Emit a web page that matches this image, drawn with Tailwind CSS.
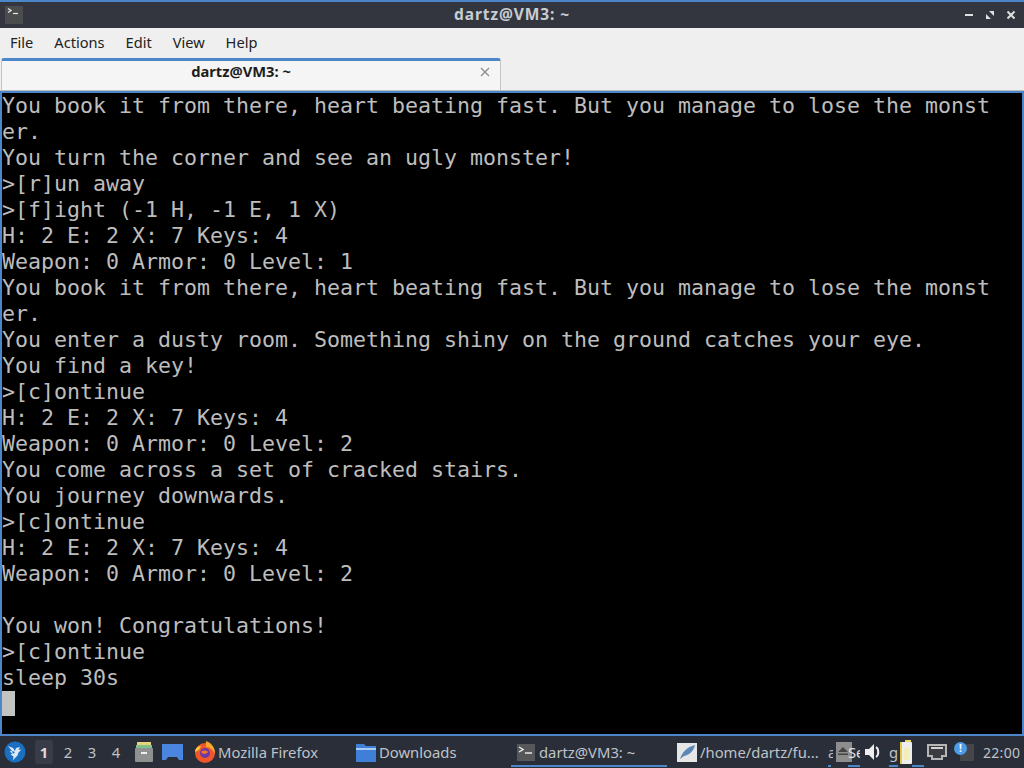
<!DOCTYPE html>
<html lang="en">
<head>
    <meta charset="UTF-8">
    <title>dartz@VM3: ~</title>
    <script src="https://cdn.jsdelivr.net/npm/@tailwindcss/browser@4"></script>
</head>
<body class="w-[1024px] h-[768px] overflow-hidden flex flex-col bg-black font-['Noto_Sans',sans-serif]">

    <!-- Title bar -->
    <div class="h-[28px] shrink-0 border-t-2 border-[#4a86c8] bg-[#33363f] grid grid-cols-[1fr_auto_1fr] items-center px-[5px]">
        <svg class="w-[18px] h-[18px]" viewBox="0 0 18 18">
            <rect width="18" height="18" fill="#4a4c4e"/>
            <path d="M3 2.500l3 2-3 2" fill="none" stroke="#e8e8e8" stroke-width="1.300"/>
            <path d="M8 7.500h5" stroke="#e8e8e8" stroke-width="1.200"/>
        </svg>
        <div class="text-[15.5px] leading-[20px] -mt-[2px] font-bold tracking-[0.9px] text-[#c8cdd4]">dartz@VM3: ~</div>
        <div class="flex items-center justify-end gap-[11px] pr-[3px]">
            <svg class="w-[10px] h-[10px]" viewBox="0 0 10 10"><path d="M1 5h8" stroke="#e0e0e0" stroke-width="2"/></svg>
            <svg class="w-[10px] h-[10px]" viewBox="0 0 10 10"><path d="M4 1h5v5zM1 4v5h5z" fill="#e0e0e0"/></svg>
            <svg class="w-[10px] h-[10px]" viewBox="0 0 10 10"><path d="M1.500 1.500l7 7M8.500 1.500l-7 7" stroke="#e0e0e0" stroke-width="2"/></svg>
        </div>
    </div>

    <!-- Menu bar -->
    <div class="h-[30px] shrink-0 bg-[#efefef] flex items-center gap-[21px] pl-[10px] text-[14.6px] text-[#222]">
        <span>File</span><span>Actions</span><span>Edit</span><span>View</span><span>Help</span>
    </div>

    <!-- Tab bar -->
    <div class="h-[32px] shrink-0 bg-[#efefef] flex items-stretch border-b border-[#bcbcbc] box-content">
        <div class="w-[500px] ml-[1px] bg-[#f5f5f5] border-t-[3px] border-x border-t-[#4a86c8] border-x-[#c4c4c4] rounded-t-[3px] flex items-center relative pb-[8px]">
            <div class="flex-1 text-center text-[14.7px] font-bold text-[#1c1c1c] pr-[20px]">dartz@VM3: ~</div>
            <svg class="absolute right-[10px] top-[6px] w-[10px] h-[10px]" viewBox="0 0 10 10"><path d="M1 1l8 8M9 1l-8 8" stroke="#8a8a8a" stroke-width="1.200"/></svg>
        </div>
    </div>

    <!-- Terminal -->
    <div class="h-[645px] shrink-0 bg-black border-x-2 border-t-2 border-b-2 border-[#4a86c8] overflow-hidden">
        <pre class="font-['DejaVu_Sans_Mono',monospace] text-[21.6px] leading-[26px] text-[#bdbdbd]">You book it from there, heart beating fast. But you manage to lose the monst
er.
You turn the corner and see an ugly monster!
&gt;[r]un away
&gt;[f]ight (-1 H, -1 E, 1 X)
H: 2 E: 2 X: 7 Keys: 4
Weapon: 0 Armor: 0 Level: 1
You book it from there, heart beating fast. But you manage to lose the monst
er.
You enter a dusty room. Something shiny on the ground catches your eye.
You find a key!
&gt;[c]ontinue
H: 2 E: 2 X: 7 Keys: 4
Weapon: 0 Armor: 0 Level: 2
You come across a set of cracked stairs.
You journey downwards.
&gt;[c]ontinue
H: 2 E: 2 X: 7 Keys: 4
Weapon: 0 Armor: 0 Level: 2

You won! Congratulations!
&gt;[c]ontinue
sleep 30s</pre>
        <div class="w-[13px] h-[25px] bg-[#c2c4c2]"></div>
    </div>

    <!-- Panel -->
    <div class="flex-1 bg-[#2a2e39] flex items-center text-[14.8px] text-[#bfc3c8] relative">
        <svg class="w-[22px] h-[22px] ml-[4px] shrink-0" viewBox="0 0 22 22">
            <circle cx="11" cy="11" r="10.500" fill="#1a6fc0"/>
            <path d="M4 5l5 2 2 3 1-3 4-1-1.500 3 3-.5-3 3-1 3-3 3-1.500 2 .5-4-3-2 2-1-3-2 2.500-.5z" fill="#dce9f5"/>
            <path d="M8 10l3 1-2 2z" fill="#1a6fc0"/>
        </svg>
        <div class="w-[18px] h-[24px] ml-[9px] shrink-0 bg-[#383c48] rounded-[2px] flex items-center justify-center font-bold text-[#dcdcdc]">1</div>
        <div class="flex ml-[3px] shrink-0"><span class="w-[24px] text-center">2</span><span class="w-[24px] text-center">3</span><span class="w-[24px] text-center">4</span></div>
        <svg class="w-[20px] h-[22px] ml-[6px] shrink-0" viewBox="0 0 20 22">
            <rect x="3" y="1" width="14" height="3" fill="#e8d27a"/>
            <rect x="2" y="4" width="16" height="3" fill="#7fbf8a"/>
            <rect x="1" y="7" width="18" height="14" rx="1" fill="#8f9090"/>
            <rect x="7" y="11" width="6" height="2" fill="#eee"/>
        </svg>
        <svg class="w-[21px] h-[17px] ml-[8px] shrink-0" viewBox="0 0 21 17">
            <path d="M0 0h21v16h-4l-2-3h-9l-2 3h-4z" fill="#4a86e0"/>
        </svg>

        <div class="flex items-center ml-[11px] w-[162px] shrink-0">
            <svg class="w-[22px] h-[24px] shrink-0" viewBox="0 0 22 24">
                <circle cx="11" cy="13" r="10" fill="#f0562a"/>
                <path d="M12 1c6 2 9 7 9 13-2-4-5-7-9-7z" fill="#f9a82c"/>
                <path d="M1 12c0-4 3-6 6-6l-2 4z" fill="#fbc83a"/>
                <circle cx="11" cy="13" r="5" fill="#6a3aa8"/>
                <path d="M7 12c2-2 5-2 7 0-1 2-5 3-7 0z" fill="#f0762a"/>
            </svg>
            <span class="ml-[2px] whitespace-nowrap">Mozilla Firefox</span>
        </div>

        <div class="flex items-center w-[155px] shrink-0">
            <svg class="w-[20px] h-[19px] shrink-0" viewBox="0 0 20 19">
                <path d="M0 1h8l2 2h10v16h-20z" fill="#3f7fd8"/>
                <path d="M0 5h20v2h-20z" fill="#a8cdf5"/>
            </svg>
            <span class="ml-[3px]">Downloads</span>
        </div>

        <div class="flex items-center h-full w-[156px] shrink-0 relative pl-[6px]">
            <svg class="w-[18px] h-[17px] shrink-0" viewBox="0 0 18 17">
                <rect width="18" height="17" fill="#55575a"/>
                <path d="M2 3l4 2.500-4 2.500" fill="none" stroke="#f0f0f0" stroke-width="1.400"/>
                <path d="M8 9h7" stroke="#f0f0f0" stroke-width="1.400"/>
            </svg>
            <span class="ml-[4px] whitespace-nowrap">dartz@VM3: ~</span>
            <div class="absolute left-0 right-0 bottom-[1px] h-[2px] bg-[#4a86c8]"></div>
        </div>

        <div class="flex items-center w-[151px] ml-[10px] shrink-0">
            <svg class="w-[20px] h-[19px] shrink-0" viewBox="0 0 20 19">
                <rect width="20" height="19" fill="#e6e6e6"/>
                <path d="M3 16C5 9 10 4 18 2c-1 5-5 10-11 11z" fill="#5a86b8"/>
            </svg>
            <span class="ml-[3px] whitespace-nowrap">/home/dartz/fu...</span>
        </div>

        <!-- Tray -->
        <div class="relative h-full w-[8px] shrink-0 flex items-center">
            <span class="w-[5px] overflow-hidden">a</span>
            <div class="absolute left-0 bottom-[1px] w-[3px] h-[2px] bg-[#4a86c8]"></div>
        </div>
        <div class="w-[16px] h-[20px] bg-[#8d8d8d] shrink-0 flex items-start justify-start pt-[5px] pl-[2px]">
            <svg class="w-[10px] h-[8px]" viewBox="0 0 10 8"><path d="M5 0l5 5h-10z M0 6.500h10v1.500h-10z" fill="#444"/></svg>
        </div>
        <div class="relative h-full w-[12px] -ml-[4px] shrink-0 flex items-center">
            <span class="w-[12px] overflow-hidden text-[#e4e4e4]">Se</span>
            <div class="absolute left-0 right-0 bottom-[1px] h-[2px] bg-[#4a86c8]"></div>
        </div>
        <svg class="w-[16px] h-[16px] ml-[5px] shrink-0" viewBox="0 0 16 16">
            <path d="M0 5h4l5-5v16l-5-5h-4z" fill="#eee"/>
            <path d="M11 3c3 2 3 8 0 10" fill="none" stroke="#eee" stroke-width="2"/>
        </svg>
        <div class="relative h-full w-[11px] ml-[8px] shrink-0 flex items-center">
            <span>g</span>
            <div class="absolute left-0 right-[2px] bottom-[1px] h-[2px] bg-[#4a86c8]"></div>
        </div>
        <div class="relative h-full w-[24px] shrink-0 flex items-center">
            <svg class="w-[13px] h-[24px] shrink-0" viewBox="0 0 13 24">
                <rect x="5" y="0" width="6" height="2" fill="#e8d86a"/>
                <rect x="0" y="2" width="12" height="22" rx="1" fill="#eee"/>
                <rect x="0" y="2" width="2" height="22" fill="#e8c84a"/>
                <rect x="4" y="8" width="5" height="12" fill="#f3eeb8"/>
            </svg>
            <div class="absolute left-[12px] right-0 bottom-[1px] h-[2px] bg-[#4a86c8]"></div>
        </div>
        <svg class="w-[20px] h-[17px] ml-[3px] shrink-0" viewBox="0 0 20 17">
            <path d="M0 0h20v13h-4v3h-12v-3h-4z" fill="#b5b5b5"/>
            <path d="M2 2h16v9h-4v3h-8v-3h-4z" fill="#3a3c40"/>
            <path d="M4 3h12v2h-12z" fill="#d0d0d0"/>
        </svg>
        <div class="w-[14px] h-[17px] ml-[13px] shrink-0 relative bg-[#45464a]">
            <div class="absolute -left-[6px] -top-[2px] w-[13px] h-[13px] rounded-full bg-[#4d9ce8] text-white text-[10px] font-bold leading-[13px] text-center">!</div>
        </div>
        <span class="ml-[9px] text-[14px] tracking-[0.3px]">22:00</span>
    </div>

</body>
</html>
